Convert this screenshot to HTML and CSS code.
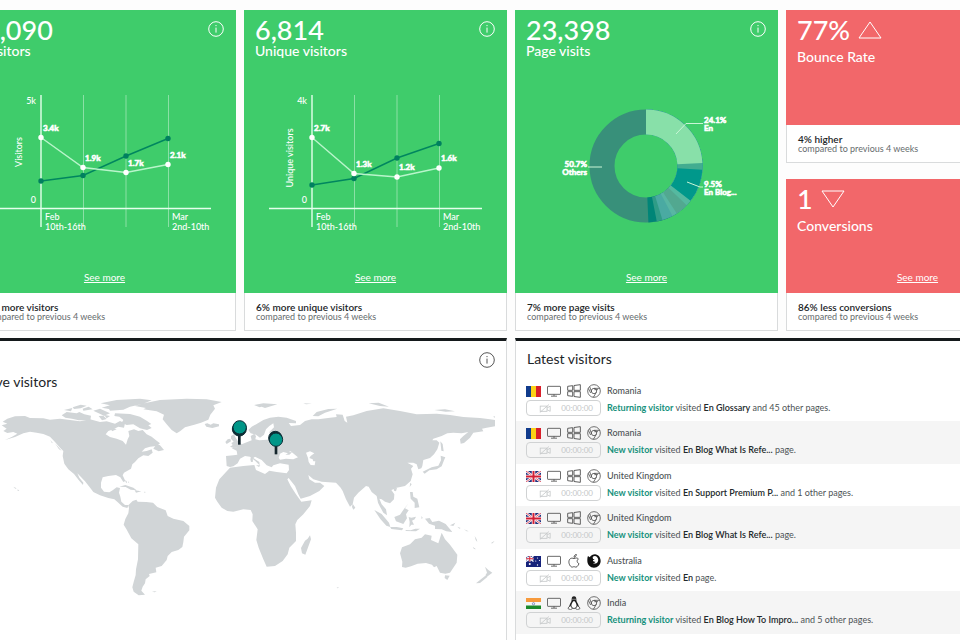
FILE: index.html
```html
<!DOCTYPE html>
<html lang="en">
<head>
<meta charset="utf-8">
<title>Visitor dashboard</title>
<link rel="stylesheet" href="styles.css">
</head>
<body>
<svg class="sprite" aria-hidden="true">
  <symbol id="info" viewBox="0 0 16 16"><g fill="none" stroke="currentColor"><circle cx="8" cy="8" r="7.3"/><path d="M8 6.6v5"/></g><circle cx="8" cy="4.6" r=".7" fill="currentColor"/></symbol>
  <symbol id="monitor" viewBox="0 0 42 36"><g fill="none" stroke="#555" stroke-width="2.6"><rect x="1.5" y="4" width="39" height="24" rx="1.5"/><path d="M21 28v5M12 33.500h18"/></g></symbol>
  <symbol id="windows" viewBox="0 0 42 42"><g fill="none" stroke="#555" stroke-width="2.8" stroke-linejoin="round"><path d="M2 7l15-2v14H2zM21 4.500l19-2.500v17H21zM2 23h15v14L2 35zM21 23h19v17l-19-2.500z"/></g></symbol>
  <symbol id="chrome" viewBox="0 0 42 42"><g fill="none" stroke="#555" stroke-width="2.5"><circle cx="21" cy="21" r="19"/><circle cx="21" cy="21" r="8"/><path d="M21 13h18M8 8l6 16M4 13l7 14M28 25l-9 15M33 17H22"/></g></symbol>
  <symbol id="apple" viewBox="0 0 42 42"><g fill="none" stroke="#333" stroke-width="2.4" stroke-linejoin="round"><path d="M34 15c-4-5-9-3-13-1-4-2-9-3-13 2-5 7-1 18 4 22 4 3 6 0 9 0s5 3 9 0c3-3 5-6 6-9-7-3-7-11-2-14z"/><path d="M21 10c0-5 3-8 7-9 0 5-3 8-7 9z"/></g></symbol>
  <symbol id="firefox" viewBox="0 0 42 42"><path fill="#111" d="M3 6l5 4C12 4 18 1 24 1c10 1 17 9 17 20 0 11-9 20-20 20S1 32 1 21C1 15 1 10 3 6z"/><path fill="#fff" d="M17 9c4-4 10-3 13 0 4 4 5 11 2 15-3 5-10 6-14 3 4 0 6-1 7-4-4 1-8-1-7-4l5-3-5-1z"/></symbol>
  <symbol id="linux" viewBox="0 0 42 42"><path fill="#222" d="M21 1c-5 0-7 4-7 9 0 6-2 9-5 14-2 4-3 8-3 12h8c3 3 11 3 14 0h8c0-4-1-8-3-12-3-5-5-8-5-14 0-5-2-9-7-9z"/><path fill="#fff" d="M21 15c-4 1-8 10-8 15 0 4 4 6 8 6s8-2 8-6c0-5-4-14-8-15zM17 8h2v4h-2zM23 8h2v4h-2z"/><path fill="#fff" stroke="#333" stroke-width="2" d="M5 33l7-4 4 9-5 3-8-3zM37 33l-7-4-4 9 5 3 8-3z"/></symbol>
  <symbol id="video" viewBox="0 0 30 22"><g fill="none" stroke="currentColor" stroke-width="2"><rect x="3" y="5" width="17" height="13"/><path d="M20 10l8-5v13l-8-4M2 21L25 1"/></g></symbol>
  <symbol id="ro" viewBox="0 0 15 11"><path fill="#113b8c" d="M0 0h5v11H0z"/><path fill="#fbd116" d="M5 0h5v11H5z"/><path fill="#d81f2a" d="M10 0h5v11h-5z"/></symbol>
  <symbol id="gb" viewBox="0 0 30 22" preserveAspectRatio="none"><path fill="#1b2c7a" d="M0 0h30v22H0z"/><path stroke="#fff" stroke-width="4.500" d="M0 0l30 22M30 0L0 22"/><path stroke="#d21f35" stroke-width="1.500" d="M0 0l30 22M30 0L0 22"/><path stroke="#fff" stroke-width="7" d="M15 0v22M0 11h30"/><path stroke="#d21f35" stroke-width="4" d="M15 0v22M0 11h30"/></symbol>
  <symbol id="au" viewBox="0 0 30 22"><path fill="#15227a" d="M0 0h30v22H0z"/><path stroke="#fff" stroke-width="2.500" d="M0 0l15 11M15 0L0 11"/><path stroke="#fff" stroke-width="4" d="M7.500 0v11M0 5.500h15"/><path stroke="#d21f35" stroke-width="2" d="M7.500 0v11M0 5.500h15"/><g fill="#fff"><circle cx="7.500" cy="16" r="2"/><circle cx="23" cy="4" r="1.200"/><circle cx="19.500" cy="10" r="1.200"/><circle cx="27" cy="9" r="1.200"/><circle cx="23" cy="18" r="1.400"/></g></symbol>
  <symbol id="in" viewBox="0 0 30 22"><path fill="#f7f7f7" d="M0 0h30v22H0z"/><path fill="#f79a3c" d="M0 0h30v8H0z"/><path fill="#1c8a2c" d="M0 15h30v7H0z"/><circle cx="15" cy="11.500" r="2.300" fill="none" stroke="#2b3b99"/></symbol>
</svg>

<main class="dashboard">
  <article class="card">
    <div class="body green">
      <header><div><p class="figure">8,090</p><h2>Visitors</h2></div><button class="info" aria-label="About visitors"><svg><use href="#info"/></svg></button></header>
      <svg class="chart" viewBox="0 0 263 150" role="img" aria-label="Visitors per week">
        <path class="grid" d="M110.500 10v132M153 10v132M195.500 10v132"/>
        <path class="axis" d="M68 10v132M25 123.500h213"/>
        <polyline class="dark" points="68,96 110,90.500 153,71 195,53.500"/>
        <g class="dark-dots"><circle cx="68" cy="96" r="2.700"/><circle cx="110" cy="90.500" r="2.700"/><circle cx="153" cy="71" r="2.700"/><circle cx="195" cy="53.500" r="2.700"/></g>
        <polyline class="light" points="68,52.500 110,82.500 153,87.500 195,79.500"/>
        <g class="light-dots"><circle cx="68" cy="52.500" r="2.700"/><circle cx="110" cy="82.500" r="2.700"/><circle cx="153" cy="87.500" r="2.700"/><circle cx="195" cy="79.500" r="2.700"/></g>
        <g class="value"><text x="70" y="46">3.4k</text><text x="112" y="76">1.9k</text><text x="155" y="81">1.7k</text><text x="197" y="73">2.1k</text></g>
        <g class="tick"><text x="63" y="19" text-anchor="end">5k</text><text x="63" y="118" text-anchor="end">0</text><text x="72" y="135">Feb</text><text x="72" y="145">10th-16th</text><text x="199" y="135">Mar</text><text x="199" y="145">2nd-10th</text><text transform="translate(49 67) rotate(-90)" text-anchor="middle">Visitors</text></g>
      </svg>
      <a class="more" href="#visitors">See more</a>
    </div>
    <footer><strong>6% more visitors</strong><span>compared to previous 4 weeks</span></footer>
  </article>

  <article class="card">
    <div class="body green">
      <header><div><p class="figure">6,814</p><h2>Unique visitors</h2></div><button class="info" aria-label="About unique visitors"><svg><use href="#info"/></svg></button></header>
      <svg class="chart" viewBox="0 0 263 150" role="img" aria-label="Unique visitors per week">
        <path class="grid" d="M110.500 10v132M153 10v132M195.500 10v132"/>
        <path class="axis" d="M68 10v132M25 123.500h213"/>
        <polyline class="dark" points="68,100 110,93.500 153,73 195,58.500"/>
        <g class="dark-dots"><circle cx="68" cy="100" r="2.700"/><circle cx="110" cy="93.500" r="2.700"/><circle cx="153" cy="73" r="2.700"/><circle cx="195" cy="58.500" r="2.700"/></g>
        <polyline class="light" points="68,52.500 110,88.500 153,92 195,83"/>
        <g class="light-dots"><circle cx="68" cy="52.500" r="2.700"/><circle cx="110" cy="88.500" r="2.700"/><circle cx="153" cy="92" r="2.700"/><circle cx="195" cy="83" r="2.700"/></g>
        <g class="value"><text x="70" y="46">2.7k</text><text x="112" y="82">1.3k</text><text x="155" y="85">1.2k</text><text x="197" y="76">1.6k</text></g>
        <g class="tick"><text x="63" y="19" text-anchor="end">4k</text><text x="63" y="118" text-anchor="end">0</text><text x="72" y="135">Feb</text><text x="72" y="145">10th-16th</text><text x="199" y="135">Mar</text><text x="199" y="145">2nd-10th</text><text transform="translate(49 73) rotate(-90)" text-anchor="middle">Unique visitors</text></g>
      </svg>
      <a class="more" href="#unique">See more</a>
    </div>
    <footer><strong>6% more unique visitors</strong><span>compared to previous 4 weeks</span></footer>
  </article>

  <article class="card">
    <div class="body green">
      <header><div><p class="figure">23,398</p><h2>Page visits</h2></div><button class="info" aria-label="About page visits"><svg><use href="#info"/></svg></button></header>
      <svg class="chart" viewBox="0 0 263 150" role="img" aria-label="Share of page visits">
        <g transform="translate(131 81) rotate(-90)" fill="none" stroke-width="25">
          <circle r="44" pathLength="360" stroke="#38907a"/>
          <circle r="44" pathLength="360" stroke="#008577" stroke-dasharray="177.500 360"/>
          <circle r="44" pathLength="360" stroke="#2f9c87" stroke-dasharray="169 360"/>
          <circle r="44" pathLength="360" stroke="#4aaaa2" stroke-dasharray="163 360"/>
          <circle r="44" pathLength="360" stroke="#58b6a3" stroke-dasharray="152 360"/>
          <circle r="44" pathLength="360" stroke="#52a890" stroke-dasharray="147 360"/>
          <circle r="44" pathLength="360" stroke="#55b9a0" stroke-dasharray="134 360"/>
          <circle r="44" pathLength="360" stroke="#00988b" stroke-dasharray="128 360"/>
          <circle r="44" pathLength="360" stroke="#42ad90" stroke-dasharray="94 360"/>
          <circle r="44" pathLength="360" stroke="#88e0a9" stroke-dasharray="86.800 360"/>
        </g>
        <path class="leader" d="M161 49l10-10.500h17M73 82h14M172 97l13 5h3"/>
        <g class="value"><text x="189" y="38">24.1%</text><text x="189" y="46">En</text><text x="72" y="82" text-anchor="end">50.7%</text><text x="72" y="90" text-anchor="end">Others</text><text x="189" y="102">9.5%</text><text x="189" y="110">En Blog...</text></g>
      </svg>
      <a class="more" href="#pages">See more</a>
    </div>
    <footer><strong>7% more page visits</strong><span>compared to previous 4 weeks</span></footer>
  </article>

  <div class="stack">
    <article class="card">
      <div class="body red">
        <header><div><p class="figure trend">77% <svg viewBox="0 0 24 18" aria-label="up"><path d="M12 1L1 17h22z"/></svg></p><h2>Bounce Rate</h2></div></header>
      </div>
      <footer><strong>4% higher</strong><span>compared to previous 4 weeks</span></footer>
    </article>
    <article class="card">
      <div class="body red">
        <header><div><p class="figure trend">1 <svg viewBox="0 0 24 18" aria-label="down"><path d="M12 17L1 1h22z"/></svg></p><h2>Conversions</h2></div></header>
        <a class="more" href="#conversions">See more</a>
      </div>
      <footer><strong>86% less conversions</strong><span>compared to previous 4 weeks</span></footer>
    </article>
  </div>

  <section class="panel map-panel">
    <button class="info" aria-label="About live visitors"><svg><use href="#info"/></svg></button>
    <h2>Live visitors</h2>
    <svg class="map" viewBox="-45 180 1530 630" role="img" aria-label="World map of live visitors">
      <g class="land">
        <path d="M5 268L22 263 8 257 22 248 45 241 75 240 90 246 130 247 150 251 180 248 240 256 270 250 300 258 320 256 345 263 360 255 375 262 372 275 355 272 340 280 325 285 317 295 330 303 350 308 368 315 378 326 383 310 388 300 385 285 402 280 415 285 428 282 440 295 455 302 468 313 480 322 470 330 450 332 435 337 425 347 440 345 455 340 458 350 445 360 430 358 415 367 405 378 397 385 393 398 372 410 368 418 376 435 370 438 361 424 348 417 325 420 308 424 303 440 303 455 312 467 328 469 338 463 350 454 360 456 357 470 361 482 364 497 375 507 386 507 382 516 368 512 355 500 343 490 325 486 300 478 280 468 268 452 255 436 240 420 232 412 238 425 250 440 249 447 236 432 222 414 205 400 193 383 188 360 190 345 180 335 165 318 150 302 130 294 110 290 90 287 70 292 45 303 15 312 35 303 52 293 40 288 22 291 10 285 20 278z"/>
        <path d="M385 508l13-13 11-4 4 6 26 1 20 2 13 13 25 10 6 17 17 8 30 7 18 15v13l-16 19-2 16-3 15-12 9-20 6-12 12-3 12-15 18-18 5 2 14-22 5 2 6-12 10-2 12-7 10-4 12 11 12-19 2-15-11-4-13 4-16 6-21 1-17 6-30 1-45-21-18-15-28-8-13 5-17 9-17 2-15zM456 767l14-2-6 4zM40 452l10 5-4 1zM53 460l5 4-5 1zM358 452l18-5 24 8 10 8-18-2-15-8zM404 463l20 3-16 4zM432 467l6 1-5 2zM377 432l4 6-2 4-3-6zM384 434l4 8-3-2zM151 312l8 10-4-2zM165 322l20 22-8-4zM460 338l10-14 10 4 12 14-16 4z"/>
        <path d="M405 210l35-10 40-8 80-4 60 2 45 8-25 10 5 10-14 18-6 15-22 9-20 6-28 8-15 12-10 6-15-10-15-17-12-15 4-14-22-10-40-6 8-4zM614 264l8-2 10 4 8-4 17 3v6l-20 5-18-4zM305 215l25-7-28-6 48-10 70-4 35 5-25 10-40 9-20 9-40 3-3-5zM345 232l45 2 30 8 20 12 14 10-9 4 10 8-14 6-21-5-20-12-20 2-15-7 5-8-12-10-15-2zM185 238l15-10 30 4 8-4 15 7 20 4-2 14-35 0-20-5-20-3zM192 222l25-6-4 10zM218 214l24-8 18 3-18 8-20 2zM248 218l18-6 12 8-28 4zM280 224l20-6 30 14-18 7zM296 240l14-1 10 10-14 4zM312 236l18 4-10 7zM330 272l20 8-14 6z"/>
        <path d="M676 318l7-8 8-2 2 8-13 8zM690 332l8-5-4-6 7-4-8-9 0-8 9-5 5 10 8 12 12 9-8 8-18 2z"/>
        <path d="M680 390L678 360 700 358 712 356 710 344 695 337 711 334 725 325 742 318 755 313 752 300 762 294 768 300 766 310 778 313 800 311 830 308 828 300 812 298 808 288 822 274 820 262 808 270 798 280 792 296 780 305 768 296 752 292 745 282 755 272 770 264 790 252 810 245 835 242 860 245 888 255 888 262 866 261 873 270 900 267 915 255 935 250 955 250 990 245 1010 243 1008 235 1028 236 1034 255 1042 260 1038 242 1060 238 1100 225 1150 217 1200 225 1250 235 1310 233 1350 237 1390 243 1440 246 1470 250 1485 252 1485 271 1460 275 1446 278 1450 286 1420 290 1410 305 1392 321 1382 323 1380 310 1390 300 1405 288 1385 292 1360 290 1342 292 1325 300 1300 308 1297 313 1310 313 1318 320 1312 340 1302 355 1290 366 1270 372 1267 390 1264 397 1255 400 1250 385 1240 380 1222 380 1240 390 1233 398 1238 415 1232 435 1215 450 1190 455 1180 460 1174 462 1183 475 1182 490 1170 502 1155 497 1145 490 1138 488 1145 505 1158 520 1161 538 1150 530 1140 512 1134 500 1130 480 1115 468 1106 452 1098 450 1075 470 1062 485 1058 505 1050 512 1038 490 1028 465 1022 455 1008 440 965 437 940 430 925 417 928 430 945 440 960 440 973 450 958 465 930 480 902 488 895 475 885 450 866 426 862 430 872 450 888 475 904 497 935 493 930 510 910 535 892 552 886 565 888 590 888 615 868 635 863 655 848 675 825 690 800 692 790 670 776 635 769 612 773 580 757 555 758 535 752 522 730 520 700 527 682 525 665 515 652 497 645 485 648 455 658 430 678 408 690 395 730 390 763 387 768 402 795 414 808 404 830 408 860 412 867 402 866 386 840 382 820 388 815 394 800 388 785 372 765 362 760 366 778 378 779 388 765 374 750 362 735 360 720 368 713 382 700 391 690 393z"/>
        <path d="M753 362l5 1 1 14-6 1-2-8zM768 388h13l-4 5zM930 598l3 12-17 46-10-4-3-16 12-22 8-6zM938 240l12-12 35-9 27-1-37 12-20 11zM762 207l28-5 42 3-37 11-10-4-6 2zM910 202l26 1-18 2zM1106 202l30-2 31 12-27-2zM1303 222l32-2 30 6-28 1zM1485 241l-6 1 6 3zM1058 503l8 12-6 6-4-8zM1268 407l27-13 20-5 8-16-1-14 14 5-4 9-7 18-15 9-22 3-14 10zM1321 316l7 8 3 22-7-2zM1231 440l4 5-6 8zM1181 457l10-1-3 10-6-2zM1230 468l8 0 2 14 12 6 6 26-14 2 0-16-12-12zM1214 516l12-14-10 13zM1183 543l17-7 14-20 12 7-8 12 3 12-11 17-22-8zM1123 522l22 12 22 26 4 13-12-4-18-20zM1170 572l20 1 20 4-4 6-32-4zM1216 582l16 1 14-5 14 0-12 8-30-1zM1226 543l8 2 14-3-4 8-8 4 6 12-8 0-6 8 1-16zM1264 540l4 5-3 5zM1275 548l14-2 8 12 20-4 20 10 20 24-18-2-14-6-20-1 0-10-18-6zM1350 568l16-8-6 10zM1372 572l10 4-4 2zM1392 580l14 6-6 0zM1424 600l6 10 2 8-5-6zM1418 632l10 8-6-1zM1472 622l12-8-6 8z"/>
        <path d="M1200 652l6-18 24-9 15-15 20-5 10-10 20 4-2 13 22 10 10-32 10 20 15 16 22 30-2 24-20 30-14 3-16-3-10-20-8 4-6-8-18-5-25 2-20 8-16 4-11-2 1-16zM1335 718l14 1-7 13-8-6zM1455 692l10 10 12 8-10 8-8 6-2-8 4-6zM1458 718l4 5-22 18-12 1 12-10zM1010 754l8 1-6 2z"/>
      </g>
      <path class="water" d="M840 353l10-5 14 4-8 4 12 0 8-7-10-1 6-2 22 18-14 6-22-2-18 3-4-6zM918 350l12-4 13 6-11 8-4 6 10 4 2 6 6 0-2 12-12-1-6-9-2-12z"/>
      <g class="pin"><path d="M718 296v30"/><circle class="shade" cx="718" cy="279" r="21"/><circle cx="719" cy="274" r="20"/></g>
      <g class="pin"><path d="M828 325v30"/><circle class="shade" cx="826" cy="306" r="20"/><circle cx="828" cy="311" r="20"/></g>
    </svg>
  </section>

  <section class="panel latest">
    <h2>Latest visitors</h2>
    <ul>
      <li><div class="icons"><svg class="flag"><use href="#ro"/></svg><svg><use href="#monitor"/></svg><svg><use href="#windows"/></svg><svg><use href="#chrome"/></svg></div><span>Romania</span><button class="replay"><svg><use href="#video"/></svg>00:00:00</button><p><b>Returning visitor</b> visited <strong>En Glossary</strong> and 45 other pages.</p></li>
      <li><div class="icons"><svg class="flag"><use href="#ro"/></svg><svg><use href="#monitor"/></svg><svg><use href="#windows"/></svg><svg><use href="#chrome"/></svg></div><span>Romania</span><button class="replay"><svg><use href="#video"/></svg>00:00:00</button><p><b>New visitor</b> visited <strong>En Blog What Is Refe...</strong> page.</p></li>
      <li><div class="icons"><svg class="flag"><use href="#gb"/></svg><svg><use href="#monitor"/></svg><svg><use href="#windows"/></svg><svg><use href="#chrome"/></svg></div><span>United Kingdom</span><button class="replay"><svg><use href="#video"/></svg>00:00:00</button><p><b>New visitor</b> visited <strong>En Support Premium P...</strong> and 1 other pages.</p></li>
      <li><div class="icons"><svg class="flag"><use href="#gb"/></svg><svg><use href="#monitor"/></svg><svg><use href="#windows"/></svg><svg><use href="#chrome"/></svg></div><span>United Kingdom</span><button class="replay"><svg><use href="#video"/></svg>00:00:00</button><p><b>New visitor</b> visited <strong>En Blog What Is Refe...</strong> page.</p></li>
      <li><div class="icons"><svg class="flag"><use href="#au"/></svg><svg><use href="#monitor"/></svg><svg><use href="#apple"/></svg><svg><use href="#firefox"/></svg></div><span>Australia</span><button class="replay"><svg><use href="#video"/></svg>00:00:00</button><p><b>New visitor</b> visited <strong>En</strong> page.</p></li>
      <li><div class="icons"><svg class="flag"><use href="#in"/></svg><svg><use href="#monitor"/></svg><svg><use href="#linux"/></svg><svg><use href="#chrome"/></svg></div><span>India</span><button class="replay"><svg><use href="#video"/></svg>00:00:00</button><p><b>Returning visitor</b> visited <strong>En Blog How To Impro...</strong> and 5 other pages.</p></li>
    </ul>
  </section>
</main>
</body>
</html>
```
FILE: styles.css
```css
* { box-sizing: border-box; }

html { height: 100%; }

body {
  margin: 0;
  min-height: 100%;
  display: flex;
  overflow: hidden;
  background: #fdfdfd;
  color: #1c2528;
  font-family: Lato, "Liberation Sans", sans-serif;
}

h2, p, ul { margin: 0; padding: 0; font-weight: 400; }
button { padding: 0; font: inherit; background: none; border: 0; }
svg { display: block; }
.sprite { display: none; }

/* The board is wider than the window and runs past both sides. */
.dashboard {
  flex: 1;
  display: grid;
  grid-template-columns: repeat(4, minmax(0, 1fr));
  grid-template-rows: auto 1fr;
  gap: 7px 8px;
  margin: 10px -89px 0 -27px;
}

.card { display: flex; flex-direction: column; }
.body { flex: 1; display: flex; flex-direction: column; color: #fff; }
.green { background: #3fcc6b; }
.red { background: #f2676a; }

.card header {
  display: flex;
  justify-content: space-between;
  padding: 8px 12px 0 11px;
}
.figure { font-size: 27px; line-height: 24px; font-weight: 500; }
.card h2 { font-size: 14px; line-height: 18px; font-weight: 500; }
.trend { display: flex; align-items: center; gap: 8px; margin-bottom: 6px; }
.trend svg { width: 24px; height: 18px; fill: none; stroke: currentColor; }

.info { width: 16px; height: 16px; margin-top: 3px; color: inherit; }
.info svg { width: 16px; height: 16px; }

.chart { width: 100%; margin: 25px 0 36px; }
.grid { stroke: #fff; stroke-opacity: .4; }
.axis { stroke: #e4ffec; fill: none; stroke-width: 1.4; }
.dark { fill: none; stroke: #00865f; stroke-width: 1.4; }
.dark-dots { fill: #00805f; }
.light { fill: none; stroke: #b9f5cb; stroke-width: 1.4; }
.light-dots { fill: #fff; }
.leader { fill: none; stroke: #c9f5d6; }
.value, .tick { fill: #fff; font-size: 9px; }
.tick { font-weight: 500; }
.value { font-size: 8px; font-weight: 700; stroke: #fff; stroke-width: .6; }

.more {
  align-self: center;
  margin: auto 0 10px;
  color: #fff;
  font-size: 10px;
  line-height: 12px;
}

.card footer {
  padding: 10px 11px 9px;
  background: #fff;
  border: 1px solid #d9dbdc;
  border-top: 0;
  font-size: 9px;
  line-height: 9px;
}
.card footer strong, .card footer span { display: block; }
.card footer strong { font-size: 10px; font-weight: 600; }
.card footer span { color: #666c6e; }

.stack { display: grid; grid-template-rows: 1fr 1fr; gap: 16px; }

.panel {
  grid-column: span 2;
  background: #fff;
  border: 1px solid #d9dbdc;
  border-top: 3px solid #14191b;
  border-bottom: 0;
}
.panel h2 { font-size: 14px; line-height: 20px; }

.map-panel { display: flex; flex-direction: column; padding: 8px 11px 0; }
.map-panel .info { align-self: flex-end; color: #555; }
.map-panel h2 { margin-top: 4px; }
.map { width: 100%; margin-top: 4px; }
.land { fill: #d1d5d7; }
.water { fill: #fff; }
.pin circle { fill: #009688; stroke: #0d2c35; stroke-width: 3; }
.pin .shade { fill: #0d2c35; }
.pin path { stroke: #14252c; stroke-width: 8; }

.latest h2 { padding: 8px 11px 0; }
.latest ul { margin-top: 10px; list-style: none; }
.latest li {
  display: grid;
  grid-template-columns: 75px 1fr;
  grid-template-rows: 16px 16px;
  gap: 1px 6px;
  align-items: center;
  padding: 4px 10px 5px;
  font-size: 9px;
  line-height: 12px;
  color: #4d5355;
}
.latest li:nth-child(even) { padding-bottom: 6px; background: #f5f5f5; }
.latest span { font-weight: 500; }
.icons { display: flex; justify-content: space-between; align-items: center; }
.icons svg { width: 14px; height: 14px; }
.icons .flag { width: 15px; height: 11px; }
.replay {
  display: flex;
  align-items: center;
  justify-content: space-between;
  height: 16px;
  padding: 0 7px 0 12px;
  border: 1px solid #d0d2d3;
  border-radius: 4px;
  color: #c4c7c8;
  font-size: 8px;
}
.replay svg { width: 12px; height: 9px; }
.latest b { color: #16917c; font-weight: 700; }
.latest strong { color: #22292b; font-weight: 600; }
```
